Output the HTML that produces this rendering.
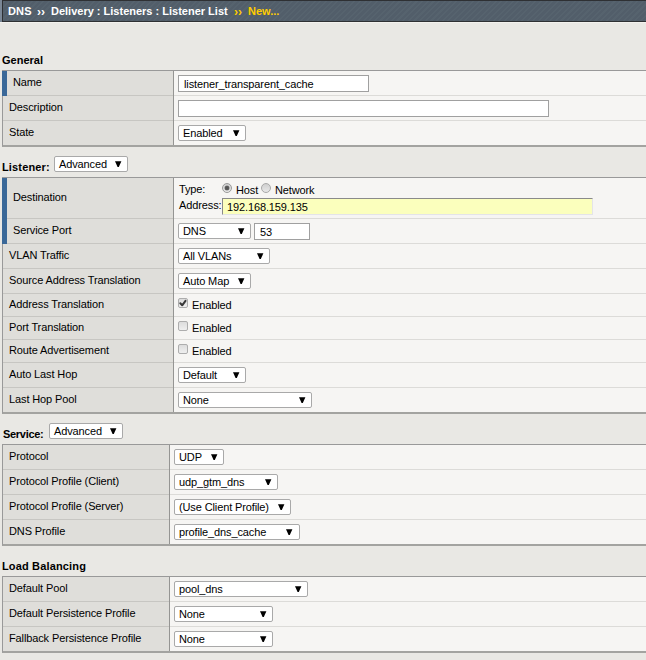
<!DOCTYPE html><html><head><meta charset="utf-8"><style>
html,body{margin:0;padding:0}
body{width:646px;height:660px;overflow:hidden;background:#e9e8e4;position:relative;font-family:"Liberation Sans",sans-serif;font-size:11px;letter-spacing:-0.12px}
div{position:absolute;box-sizing:border-box}
.t{white-space:nowrap;line-height:13px;height:13px}
.hd{left:2px;top:0;width:644px;height:22px;border:1px solid #2e3033;border-right:0;
 background:repeating-linear-gradient(135deg,#56636e 0px,#56636e 1.5px,#525e6a 1.5px,#525e6a 4px)}
.tb{left:2px;width:644px;border-top:1px solid #999999;border-left:1px solid #999999;border-bottom:2px solid #a3a3a0}
.lc{left:3px;background:#dfdeda}
.vc{width:600px;background:#f6f5f3}
.dv{width:1px;background:#959593}
.sp{left:3px;height:1px;background:#c7c6c2}
.sp2{width:600px;height:1px;background:#dcdbd8}
.bl{left:2px;width:5px;background:#3a6898}
.sel{border:1px solid #a9a9a9;border-radius:2px;background:#fff}
.sel span{position:absolute;left:4px;top:1px;line-height:13px;white-space:nowrap}
.sel svg{position:absolute}
.inp{border:1px solid #a0a0a0;background:#fff}
.inp span{position:absolute;left:5px;top:2px;line-height:13px;white-space:nowrap}
.yin{border:1px solid #e4e4e8;border-top-color:#8a8a8a;border-left-color:#8a8a8a;background:#fbffbd}
.yin span{position:absolute;left:4px;top:2px;line-height:13px;white-space:nowrap}
.cb{width:10px;height:10px;border:1px solid #adadad;border-radius:2px;background:linear-gradient(#dcdcdc,#efefef)}
.rd{width:10px;height:10px;border:1px solid #a8a8a8;border-radius:50%;background:linear-gradient(#cfcfcf,#e8e8e8)}
</style></head><body>

<div style="left:0;top:0;width:2px;height:22px;background:#7a8796"></div>
<div class="hd"></div>
<div style="left:0;top:22px;width:646px;height:1px;background:#f3f2ee"></div>
<div class="t" style="left:8px;top:5px;font-weight:bold;color:#fff;letter-spacing:0.15px">DNS</div>
<div class="t" style="left:37px;top:6px;font-weight:bold;color:#fff;font-size:12px">&rsaquo;&rsaquo;</div>
<div class="t" style="left:51px;top:5px;font-weight:bold;color:#fff;letter-spacing:0px">Delivery : Listeners : Listener List</div>
<div class="t" style="left:234px;top:6px;font-weight:bold;color:#ffcd00;font-size:12px">&rsaquo;&rsaquo;</div>
<div class="t" style="left:248px;top:5px;font-weight:bold;color:#ffcd00;letter-spacing:0px">New...</div>
<div class="t" style="left:2px;top:54px;font-weight:bold;color:#000;letter-spacing:0px">General</div>
<div class="tb" style="top:70px;height:77px"></div>
<div class="lc" style="top:71px;width:170px;height:74px"></div>
<div class="dv" style="top:71px;left:173px;height:74px"></div>
<div class="vc" style="top:71px;left:174px;height:74px"></div>
<div class="sp" style="top:95px;width:170px"></div>
<div class="sp2" style="top:95px;left:174px"></div>
<div class="bl" style="top:71px;height:25px"></div>
<div class="t" style="left:13px;top:76px;font-weight:normal;color:#000">Name</div>
<div class="sp" style="top:120px;width:170px"></div>
<div class="sp2" style="top:120px;left:174px"></div>
<div class="t" style="left:9px;top:101px;font-weight:normal;color:#000">Description</div>
<div class="t" style="left:9px;top:126px;font-weight:normal;color:#000">State</div>
<div class="inp" style="left:178px;top:75px;width:191px;height:17px"><span>listener_transparent_cache</span></div>
<div class="inp" style="left:178px;top:100px;width:371px;height:17px"><span></span></div>
<div class="sel" style="left:178px;top:125px;width:68px;height:16px"><span>Enabled</span><svg style="left:54px;top:4px" width="7" height="6"><polygon points="0,0.3 6.4,0.3 3.8,5.9 2.6,5.9" fill="#000"/></svg></div>
<div class="t" style="left:2px;top:161px;font-weight:bold;color:#000;letter-spacing:0.15px">Listener:</div>
<div class="sel" style="left:54px;top:156px;width:74px;height:16px"><span>Advanced</span><svg style="left:60px;top:4px" width="7" height="6"><polygon points="0,0.3 6.4,0.3 3.8,5.9 2.6,5.9" fill="#000"/></svg></div>
<div class="tb" style="top:177px;height:237px"></div>
<div class="lc" style="top:178px;width:170px;height:234px"></div>
<div class="dv" style="top:178px;left:173px;height:234px"></div>
<div class="vc" style="top:178px;left:174px;height:234px"></div>
<div class="sp" style="top:218px;width:170px"></div>
<div class="sp2" style="top:218px;left:174px"></div>
<div class="bl" style="top:178px;height:41px"></div>
<div class="t" style="left:13px;top:191px;font-weight:normal;color:#000">Destination</div>
<div class="sp" style="top:243px;width:170px"></div>
<div class="sp2" style="top:243px;left:174px"></div>
<div class="bl" style="top:219px;height:25px"></div>
<div class="t" style="left:13px;top:224px;font-weight:normal;color:#000">Service Port</div>
<div class="sp" style="top:268px;width:170px"></div>
<div class="sp2" style="top:268px;left:174px"></div>
<div class="t" style="left:9px;top:249px;font-weight:normal;color:#000">VLAN Traffic</div>
<div class="sp" style="top:293px;width:170px"></div>
<div class="sp2" style="top:293px;left:174px"></div>
<div class="t" style="left:9px;top:274px;font-weight:normal;color:#000">Source Address Translation</div>
<div class="sp" style="top:316px;width:170px"></div>
<div class="sp2" style="top:316px;left:174px"></div>
<div class="t" style="left:9px;top:298px;font-weight:normal;color:#000">Address Translation</div>
<div class="sp" style="top:339px;width:170px"></div>
<div class="sp2" style="top:339px;left:174px"></div>
<div class="t" style="left:9px;top:321px;font-weight:normal;color:#000">Port Translation</div>
<div class="sp" style="top:362px;width:170px"></div>
<div class="sp2" style="top:362px;left:174px"></div>
<div class="t" style="left:9px;top:344px;font-weight:normal;color:#000">Route Advertisement</div>
<div class="sp" style="top:387px;width:170px"></div>
<div class="sp2" style="top:387px;left:174px"></div>
<div class="t" style="left:9px;top:368px;font-weight:normal;color:#000">Auto Last Hop</div>
<div class="t" style="left:9px;top:393px;font-weight:normal;color:#000">Last Hop Pool</div>
<div class="t" style="left:179px;top:183px;font-weight:normal;color:#000">Type:</div>
<div class="rd" style="left:222px;top:183px;border-color:#9a9a9a;background:linear-gradient(#cfcfcf,#ececec)"><div style="left:2px;top:2px;width:4px;height:4px;border-radius:50%;background:#555;box-shadow:0 0 0 0.5px #777"></div></div>
<div class="t" style="left:236px;top:184px;font-weight:normal;color:#000">Host</div>
<div class="rd" style="left:261px;top:183px"></div>
<div class="t" style="left:275px;top:184px;font-weight:normal;color:#000">Network</div>
<div class="t" style="left:179px;top:199px;font-weight:normal;color:#000">Address:</div>
<div class="yin" style="left:222px;top:198px;width:371px;height:17px"><span>192.168.159.135</span></div>
<div class="sel" style="left:178px;top:223px;width:73px;height:16px"><span>DNS</span><svg style="left:59px;top:4px" width="7" height="6"><polygon points="0,0.3 6.4,0.3 3.8,5.9 2.6,5.9" fill="#000"/></svg></div>
<div class="inp" style="left:254px;top:223px;width:56px;height:17px"><span>53</span></div>
<div class="sel" style="left:178px;top:248px;width:92px;height:16px"><span>All VLANs</span><svg style="left:78px;top:4px" width="7" height="6"><polygon points="0,0.3 6.4,0.3 3.8,5.9 2.6,5.9" fill="#000"/></svg></div>
<div class="sel" style="left:178px;top:273px;width:73px;height:16px"><span>Auto Map</span><svg style="left:59px;top:4px" width="7" height="6"><polygon points="0,0.3 6.4,0.3 3.8,5.9 2.6,5.9" fill="#000"/></svg></div>
<div class="cb" style="left:178px;top:298px"><svg width="10" height="10" style="position:absolute;left:-1px;top:-1px"><path d="M2.3,5.3 L4.2,7.3 L7.5,2.9" stroke="#383838" stroke-width="2" fill="none" stroke-linecap="round" stroke-linejoin="round"/></svg></div>
<div class="t" style="left:192px;top:299px;font-weight:normal;color:#000">Enabled</div>
<div class="cb" style="left:178px;top:321px"></div>
<div class="t" style="left:192px;top:322px;font-weight:normal;color:#000">Enabled</div>
<div class="cb" style="left:178px;top:344px"></div>
<div class="t" style="left:192px;top:345px;font-weight:normal;color:#000">Enabled</div>
<div class="sel" style="left:178px;top:367px;width:68px;height:16px"><span>Default</span><svg style="left:54px;top:4px" width="7" height="6"><polygon points="0,0.3 6.4,0.3 3.8,5.9 2.6,5.9" fill="#000"/></svg></div>
<div class="sel" style="left:178px;top:392px;width:134px;height:16px"><span>None</span><svg style="left:120px;top:4px" width="7" height="6"><polygon points="0,0.3 6.4,0.3 3.8,5.9 2.6,5.9" fill="#000"/></svg></div>
<div class="t" style="left:3px;top:428px;font-weight:bold;letter-spacing:-0.3px">Service:</div>
<div class="sel" style="left:49px;top:423px;width:74px;height:16px"><span>Advanced</span><svg style="left:60px;top:4px" width="7" height="6"><polygon points="0,0.3 6.4,0.3 3.8,5.9 2.6,5.9" fill="#000"/></svg></div>
<div class="tb" style="top:444px;height:102px"></div>
<div class="lc" style="top:445px;width:166px;height:99px"></div>
<div class="dv" style="top:445px;left:169px;height:99px"></div>
<div class="vc" style="top:445px;left:170px;height:99px"></div>
<div class="sp" style="top:469px;width:166px"></div>
<div class="sp2" style="top:469px;left:170px"></div>
<div class="t" style="left:9px;top:450px;font-weight:normal;color:#000">Protocol</div>
<div class="sp" style="top:494px;width:166px"></div>
<div class="sp2" style="top:494px;left:170px"></div>
<div class="t" style="left:9px;top:475px;font-weight:normal;color:#000">Protocol Profile (Client)</div>
<div class="sp" style="top:519px;width:166px"></div>
<div class="sp2" style="top:519px;left:170px"></div>
<div class="t" style="left:9px;top:500px;font-weight:normal;color:#000">Protocol Profile (Server)</div>
<div class="t" style="left:9px;top:525px;font-weight:normal;color:#000">DNS Profile</div>
<div class="sel" style="left:174px;top:449px;width:50px;height:16px"><span>UDP</span><svg style="left:36px;top:4px" width="7" height="6"><polygon points="0,0.3 6.4,0.3 3.8,5.9 2.6,5.9" fill="#000"/></svg></div>
<div class="sel" style="left:174px;top:474px;width:104px;height:16px"><span>udp_gtm_dns</span><svg style="left:90px;top:4px" width="7" height="6"><polygon points="0,0.3 6.4,0.3 3.8,5.9 2.6,5.9" fill="#000"/></svg></div>
<div class="sel" style="left:174px;top:499px;width:117px;height:16px"><span>(Use Client Profile)</span><svg style="left:103px;top:4px" width="7" height="6"><polygon points="0,0.3 6.4,0.3 3.8,5.9 2.6,5.9" fill="#000"/></svg></div>
<div class="sel" style="left:174px;top:524px;width:126px;height:16px"><span>profile_dns_cache</span><svg style="left:111px;top:4px" width="7" height="6"><polygon points="0,0.3 6.4,0.3 3.8,5.9 2.6,5.9" fill="#000"/></svg></div>
<div class="t" style="left:2px;top:560px;font-weight:bold;color:#000;letter-spacing:0.15px">Load Balancing</div>
<div class="tb" style="top:576px;height:77px"></div>
<div class="lc" style="top:577px;width:166px;height:74px"></div>
<div class="dv" style="top:577px;left:169px;height:74px"></div>
<div class="vc" style="top:577px;left:170px;height:74px"></div>
<div class="sp" style="top:601px;width:166px"></div>
<div class="sp2" style="top:601px;left:170px"></div>
<div class="t" style="left:9px;top:582px;font-weight:normal;color:#000">Default Pool</div>
<div class="sp" style="top:626px;width:166px"></div>
<div class="sp2" style="top:626px;left:170px"></div>
<div class="t" style="left:9px;top:607px;font-weight:normal;color:#000">Default Persistence Profile</div>
<div class="t" style="left:9px;top:632px;font-weight:normal;color:#000">Fallback Persistence Profile</div>
<div class="sel" style="left:174px;top:581px;width:134px;height:16px"><span>pool_dns</span><svg style="left:120px;top:4px" width="7" height="6"><polygon points="0,0.3 6.4,0.3 3.8,5.9 2.6,5.9" fill="#000"/></svg></div>
<div class="sel" style="left:174px;top:606px;width:99px;height:16px"><span>None</span><svg style="left:85px;top:4px" width="7" height="6"><polygon points="0,0.3 6.4,0.3 3.8,5.9 2.6,5.9" fill="#000"/></svg></div>
<div class="sel" style="left:174px;top:631px;width:99px;height:16px"><span>None</span><svg style="left:85px;top:4px" width="7" height="6"><polygon points="0,0.3 6.4,0.3 3.8,5.9 2.6,5.9" fill="#000"/></svg></div>
</body></html>
